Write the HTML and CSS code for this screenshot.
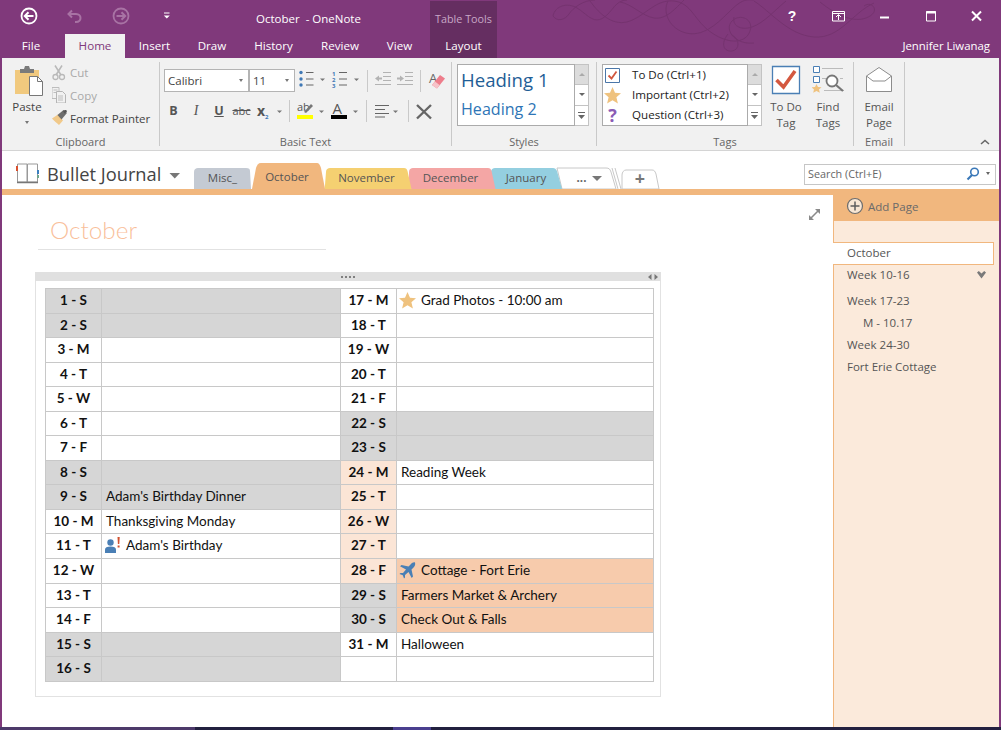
FILE: index.html
```html
<!DOCTYPE html>
<html lang="en">
<head>
<meta charset="utf-8">
<title>October - OneNote</title>
<link rel="stylesheet" href="styles.css">
</head>
<body>
<div class="app">
  <header class="titlebar">
    <svg class="ornament" viewBox="540 0 360 58" width="360" height="58" fill="none" stroke="#75336f" stroke-width="1">
      <path d="M553 16c2-10 14-14 24-8s16 16 26 10 12-18 24-18"/>
      <path d="M553 16c4 6 12 4 16-2s14-14 26-14"/>
      <path d="M590 1c10 14 24 26 40 20s26-22 44-20 20 20 38 32 34 10 38-2-10-18-18-10 2 24 22 22"/>
      <path d="M620 2c12 2 22 14 34 16s22-10 30-18"/>
      <path d="M668 1c-6 12 2 28 18 32s30-8 42-20 16-14 26-13"/>
      <path d="M728 34c-8 10-4 18 4 17s8-12 0-16"/>
      <path d="M754 1c16 10 34 34 60 36s38-24 60-34"/>
      <path d="M786 1c-10 8-22 22-34 26s-20-2-18-10"/>
      <path d="M820 2c10 8 30 22 46 16s6-18-2-12"/>
    </svg>
    <svg class="qa qa-back" viewBox="2 0 54 34" width="54" height="34"><circle cx="29" cy="16" r="7.5" fill="none" stroke="#fff" stroke-width="1.8"/><path d="M33.500 16H25M28.500 12.300L24.800 16l3.700 3.700" fill="none" stroke="#fff" stroke-width="2"/></svg>
    <svg class="qa qa-undo" viewBox="56 0 38 34" width="38" height="34"><path d="M72 10.500L68.500 14l3.500 3.500M69 14h7c6 0 6 8 0 8h-1" fill="none" stroke="#a873a4" stroke-width="2"/></svg>
    <svg class="qa qa-fwd" viewBox="94 0 54 34" width="54" height="34"><circle cx="121" cy="16" r="7.500" fill="none" stroke="#a873a4" stroke-width="1.800"/><path d="M116.500 16H125M121.500 12.300l3.700 3.700-3.700 3.700" fill="none" stroke="#a873a4" stroke-width="2"/></svg>
    <svg class="qa qa-cust" viewBox="148 0 36 34" width="36" height="34"><path d="M164 13h5.500" stroke="#fff" stroke-width="1"/><path d="M163.800 15.500h6l-3 3z" fill="#fff"/></svg>
    <div class="doc-title">October&nbsp; - OneNote</div>
    <div class="ctx-head">Table Tools</div>
    <div class="winbtns">
      <span class="winbtn help">?</span>
      <svg class="winbtn" viewBox="815 0 46 34" width="46" height="34"><path d="M832.500 11.500h12v9.500h-12zM832.500 13.500h12" fill="none" stroke="#fff"/><path d="M838.500 20v-5M836 17l2.500-2.500L841 17" fill="none" stroke="#fff"/></svg>
      <svg class="winbtn" viewBox="861 0 46 34" width="46" height="34"><path d="M880 17.500h9" stroke="#fff" stroke-width="2"/></svg>
      <svg class="winbtn" viewBox="907 0 46 34" width="46" height="34"><path d="M926.500 11.500h9v9.500h-9z" fill="none" stroke="#fff"/><path d="M926 12.500h10" stroke="#fff" stroke-width="2"/></svg>
      <svg class="winbtn" viewBox="953 0 46 34" width="46" height="34"><path d="M972 11.500l9 9M981 11.500l-9 9" stroke="#fff" stroke-width="2"/></svg>
    </div>
  </header>

  <nav class="tabs">
    <span class="tab tab-file">File</span>
    <span class="tab tab-home">Home</span>
    <span class="tab tab-insert">Insert</span>
    <span class="tab tab-draw">Draw</span>
    <span class="tab tab-history">History</span>
    <span class="tab tab-review">Review</span>
    <span class="tab tab-view">View</span>
    <span class="tab tab-layout">Layout</span>
    <span class="user">Jennifer Liwanag</span>
  </nav>

  <section class="ribbon">
    <div class="group g-clip">
      <div class="g-body clip-body">
        <div class="paste">
          <svg viewBox="13 66 30 30" width="30" height="30"><path d="M15 70h24v24H15z" fill="#f1c97e"/><path d="M20 69h4l1-3h4l1 3h4v4H20z" fill="#7a7a7a"/><path d="M29.500 76.500h8l5 5v14h-13z" fill="#fff" stroke="#777"/><path d="M37.500 76.500v5h5" fill="none" stroke="#777"/></svg>
          <span class="paste-label">Paste</span>
          <span class="caret paste-caret"></span>
        </div>
        <div class="small-col">
          <div class="small small-cut dim"><svg viewBox="52 65 16 16" width="16" height="16"><path d="M55 65.500l6 9.500M62 65.500l-6 9.500" stroke="#b9b9b9" stroke-width="1.500" fill="none"/><circle cx="55.500" cy="77" r="2.500" fill="none" stroke="#b9b9b9" stroke-width="1.300"/><circle cx="62" cy="77" r="2.500" fill="none" stroke="#b9b9b9" stroke-width="1.300"/></svg>Cut</div>
          <div class="small small-copy dim"><svg viewBox="52 88 16 16" width="16" height="16"><path d="M51.500 88.500h7v11h-7zM53 91h4M53 93.500h4" transform="translate(0.500 0)" fill="none" stroke="#bdbdbd"/><path d="M56.500 92.500h6l3 3v8.500h-9z" fill="#f1f1f1" stroke="#b5b5b5"/><path d="M58 97h5M58 99h5M58 101h5" stroke="#bdbdbd"/></svg>Copy</div>
          <div class="small"><svg viewBox="52 110 16 16" width="16" height="16"><path d="M52 118.500l6-4 5 6-4 4.500c-2-2-5-4-7-6.500z" fill="#f1c98a"/><path d="M57.500 115l6-5 3 2 0 1.500-5 6z" fill="#6d6d6d"/><path d="M63 111l3-1.500 1 2-2.500 2z" fill="#555"/></svg>Format Painter</div>
        </div>
      </div>
      <div class="g-label">Clipboard</div>
    </div>

    <div class="group g-basic">
      <div class="g-body">
        <div class="row row1">
          <div class="combo combo-font"><span>Calibri</span><span class="caret"></span></div>
          <div class="combo combo-size"><span>11</span><span class="caret"></span></div>
          <svg viewBox="295 69 33 23" width="33" height="23"><g fill="#3f78b5"><circle cx="301" cy="72.500" r="1.700"/><circle cx="301" cy="79" r="1.700"/><circle cx="301" cy="85" r="1.700"/></g><path d="M306 72.500h7.500M306 79h7.500M306 85h7.500" stroke="#666"/><path d="M320 78.500h5l-2.500 2.500z" fill="#777"/></svg>
          <svg viewBox="328 69 39 23" width="39" height="23"><text x="332" y="75.500" class="numtx">1</text><text x="332" y="81.500" class="numtx">2</text><text x="332" y="88" class="numtx">3</text><path d="M339 72.500h8M339 79h8M339 85h8" stroke="#666"/><path d="M354 78.500h5l-2.500 2.500z" fill="#777"/></svg>
          <span class="sep"></span>
          <svg viewBox="368 69 52 23" width="52" height="23"><path d="M383 72.500h8M383 76.500h8M375 84.500h16M383 80.500h8" stroke="#b3b3b3"/><path d="M375 78.500l4-3v2h3v2h-3v2z" fill="#b3b3b3"/><path d="M405 72.500h8M405 76.500h8M397 84.500h16M405 80.500h8" stroke="#b3b3b3"/><path d="M404 78.500l-4-3v2h-3v2h3v2z" fill="#b3b3b3"/></svg>
          <span class="sep"></span>
          <svg viewBox="421 69 30 23" width="30" height="23"><text x="429" y="83" class="eraser-a">A</text><path d="M432 85l8-10 5 3.500-8 10z" fill="#ee7d8b"/><path d="M432 85l3-3.500 4.500 3.500-2.500 3.500z" fill="#f6c3c9"/></svg>
        </div>
        <div class="row row2">
          <span class="fmt fmt-b">B</span>
          <span class="fmt fmt-i">I</span>
          <span class="fmt fmt-u">U</span>
          <span class="fmt fmt-s">abc</span>
          <svg viewBox="254 99 35 24" width="35" height="24"><text x="257" y="116" class="sub-x">x</text><text x="265" y="118.500" class="sub-2">2</text><path d="M277 110.500h5l-2.500 2.500z" fill="#777"/></svg>
          <span class="sep"></span>
          <svg viewBox="291 99 37 24" width="37" height="24"><text x="298" y="111" class="hl-ab">ab</text><path d="M305 112l7-8 2 2-7 7z" fill="#777"/><path d="M298 115h16v4h-16z" fill="#ffff00"/><path d="M320 110.500h5l-2.500 2.500z" fill="#777"/></svg>
          <svg viewBox="328 99 39 24" width="39" height="24"><text x="333.500" y="114" class="fc-a">A</text><path d="M332 115h16v4h-16z" fill="#000"/><path d="M354 110.500h5l-2.500 2.500z" fill="#777"/></svg>
          <span class="sep"></span>
          <svg viewBox="368 99 41 24" width="41" height="24"><path d="M376 105.500h14M376 109.500h10M376 113.500h14M376 117h10" stroke="#666"/><path d="M394 110.500h5l-2.500 2.500z" fill="#777"/></svg>
          <span class="sep"></span>
          <svg viewBox="410 99 41 24" width="41" height="24"><path d="M418 105l14 13.500M432 105l-14 13.500" stroke="#666" stroke-width="2.400"/></svg>
        </div>
      </div>
      <div class="g-label">Basic Text</div>
    </div>

    <div class="group g-styles">
      <div class="g-body gallery-wrap">
        <div class="gallery gallery-styles">
          <div class="h1">Heading 1</div>
          <div class="h2">Heading 2</div>
        </div>
        <div class="scroll">
          <span class="sb sb-up"><i class="tri-up"></i></span>
          <span class="sb"><i class="tri-down"></i></span>
          <span class="sb"><svg viewBox="0 0 7 7" width="7" height="7"><path d="M0 0h7v1H0zM0 3h7L3.500 7z" fill="#666"/></svg></span>
        </div>
      </div>
      <div class="g-label">Styles</div>
    </div>

    <div class="group g-tags">
      <div class="g-body gallery-wrap">
        <div class="gallery gallery-tags">
          <div class="tagrow"><svg viewBox="0 0 17 17" width="17" height="17"><path d="M1.500 1.500h14v14h-14z" fill="#fff" stroke="#4a76a8"/><path d="M4.500 8.500l3 3 5-7" fill="none" stroke="#d0573f" stroke-width="1.800"/></svg><span>To Do (Ctrl+1)</span></div>
          <div class="tagrow"><svg viewBox="0 0 17 17" width="17" height="17"><path d="M8.500 0l2.500 5.800 6 .5-4.600 4 1.500 6.200-5.400-3.300-5.400 3.300 1.500-6.200L0 6.300l6-.5z" fill="#efc27e"/></svg><span>Important (Ctrl+2)</span></div>
          <div class="tagrow"><span class="tag-q">?</span><span>Question (Ctrl+3)</span></div>
        </div>
        <div class="scroll">
          <span class="sb sb-up"><i class="tri-up"></i></span>
          <span class="sb"><i class="tri-down"></i></span>
          <span class="sb"><svg viewBox="0 0 7 7" width="7" height="7"><path d="M0 0h7v1H0zM0 3h7L3.500 7z" fill="#666"/></svg></span>
        </div>
        <div class="big big-todo">
          <svg viewBox="771 65 30 32" width="30" height="32"><path d="M772.500 66.500h27v27h-27z" fill="#fff" stroke="#4a7fb5" stroke-width="1.300"/><path d="M776.500 80l7 7 11.500-16" fill="none" stroke="#d4583f" stroke-width="3.600"/></svg>
          <span>To Do</span><span>Tag</span>
        </div>
        <div class="big big-find">
          <svg viewBox="812 65 32 32" width="32" height="32"><path d="M813.500 66.500h6v6h-6zM813.500 76.500h6v6h-6z" fill="#fff" stroke="#4a7fb5"/><path d="M822 68.500h21M822 78.500h4M840 78.500h3M824 90.500h20" stroke="#bbb"/><circle cx="832" cy="81" r="5.500" fill="#fff" stroke="#777" stroke-width="1.800"/><path d="M836 85l7 6" stroke="#777" stroke-width="2.200"/><path d="M816.500 84l1.500 3 3.500.3-2.500 2.200.8 3.300-3.300-1.800-3.300 1.800.8-3.300-2.500-2.200 3.500-.3z" fill="#efc27e"/></svg>
          <span>Find</span><span>Tags</span>
        </div>
      </div>
      <div class="g-label">Tags</div>
    </div>

    <div class="group g-email">
      <div class="g-body">
        <div class="big big-email">
          <svg viewBox="864 65 30 32" width="30" height="32"><path d="M866.500 76l12.500-8.500L891.500 76v15.500h-25z" fill="#fff" stroke="#8c8c8c"/><path d="M866.500 76l6.500 5h12l6.500-5" fill="none" stroke="#8c8c8c"/></svg>
          <span>Email</span><span>Page</span>
        </div>
      </div>
      <div class="g-label">Email</div>
    </div>

    <div class="collapse"><svg viewBox="0 0 10 6" width="10" height="6"><path d="M1 5l4-3.500L9 5" fill="none" stroke="#666" stroke-width="1.500"/></svg></div>
  </section>

  <section class="navrow">
    <svg class="nb-icon" viewBox="2 151 45 38" width="45" height="38"><path d="M17.500 164h9.500v18H17.500zM27.500 164H37.500v18H27.500z" fill="#fff" stroke="#999"/><path d="M17 182.500h21" stroke="#777" stroke-width="1.500"/><path d="M16 166h2v5h-2z" fill="#d9502e"/><path d="M37 170h2v4h-2z" fill="#3a7fc1"/><path d="M37 175h2v3h-2z" fill="#6fa58c"/></svg>
    <div class="nb-title">Bullet Journal</div>
    <svg class="nb-caret" viewBox="169 151 25 38" width="25" height="38"><path d="M169.500 173h10.500l-5.250 5.500z" fill="#777"/></svg>
    <div class="strip">
      <svg class="strip-bg" viewBox="194 151 470 38" width="470" height="38">
        <path d="M622 189l0-14c0-3 2-5 4-5h26c2 0 3 1 4 4l3 15z" fill="#fff" stroke="#c8c8c8"/>
        <path d="M615 168l6 21M612 168l6 21" fill="none" stroke="#c8c8c8"/>
        <path d="M557 168h49c3 0 4 1 5 4l5 17h-54z" fill="#fff" stroke="#c8c8c8"/>
        <path d="M491 172c0-3 2-4 4-4h58c2 0 3 1 4 3l5 18h-68z" fill="#94cfe0"/>
        <path d="M409 189v-17c0-3 2-4 4-4h75c2 0 3 1 3.500 3l4 18z" fill="#f4a6a5"/>
        <path d="M325 185l1-13c0-3 2-4 4-4h74c2 0 3 1 3.500 3l4 18h-87z" fill="#f5d071"/>
        <path d="M194 189v-17c0-3 2-4 4-4h48c3 0 4 1 4 3l1 18z" fill="#c4cad3"/>
        <path d="M252 189l4-21c1-3 2-5 5-5h56c2 0 3 2 4 5l4 21z" fill="#f1b77e"/>
      </svg>
      <div class="labels">
        <span class="sl sl-misc">Misc_</span>
        <span class="sl sl-oct">October</span>
        <span class="sl sl-nov">November</span>
        <span class="sl sl-dec">December</span>
        <span class="sl sl-jan">January</span>
        <span class="sl sl-more">...<i class="more-tri"></i></span>
        <span class="sl sl-plus">+</span>
      </div>
    </div>
    <div class="search">
      <span class="search-text">Search (Ctrl+E)</span>
      <svg viewBox="0 0 14 14" width="14" height="14"><circle cx="8.500" cy="5" r="3.800" fill="none" stroke="#3a78b8" stroke-width="1.600"/><path d="M6 8l-4.500 4.500" stroke="#3a78b8" stroke-width="2.200"/></svg>
      <span class="search-caret"></span>
    </div>
  </section>

  <div class="orangebar"></div>

  <main class="main">
    <div class="page">
      <svg class="expand" viewBox="0 0 13 13" width="13" height="13"><path d="M2.500 10.500l8-8" stroke="#8a8a8a" stroke-width="1.600"/><path d="M7 1h5v5zM1 7v5h5z" fill="#8a8a8a"/></svg>
      <div class="page-title"><h1>October</h1></div>
      <div class="outline">
        <div class="outline-bar">
          <svg class="grip" viewBox="0 0 14 2" width="14" height="2"><path d="M0 0h2v2H0zM4 0h2v2H4zM8 0h2v2H8zM12 0h2v2h-2z" fill="#808080"/></svg>
          <svg class="ol-arrows" viewBox="0 0 10 6" width="10" height="6"><path d="M3.500 0v6L0 3zM6.500 0v6L10 3z" fill="#777"/></svg>
        </div>
        <table class="cal">
          <colgroup><col class="c1"><col class="c2"><col class="c3"><col class="c4"></colgroup>
          <tbody>
            <tr class="t"><td class="d wk">1 - S</td><td class="wk"></td><td class="d">17 - M</td><td><span class="with-icon"><svg viewBox="0 0 17 17" width="17" height="17"><path d="M8.500 0l2.500 5.800 6 .5-4.600 4 1.500 6.200-5.400-3.300-5.400 3.300 1.500-6.200L0 6.300l6-.5z" fill="#efc27e"/></svg>Grad Photos - 10:00 am</span></td></tr>
            <tr class="s"><td class="d wk">2 - S</td><td class="wk"></td><td class="d">18 - T</td><td></td></tr>
            <tr class="t"><td class="d">3 - M</td><td></td><td class="d">19 - W</td><td></td></tr>
            <tr class="s"><td class="d">4 - T</td><td></td><td class="d">20 - T</td><td></td></tr>
            <tr class="t"><td class="d">5 - W</td><td></td><td class="d">21 - F</td><td></td></tr>
            <tr class="s"><td class="d">6 - T</td><td></td><td class="d wk">22 - S</td><td class="wk"></td></tr>
            <tr class="t"><td class="d">7 - F</td><td></td><td class="d wk">23 - S</td><td class="wk"></td></tr>
            <tr class="s"><td class="d wk">8 - S</td><td class="wk"></td><td class="d pe">24 - M</td><td>Reading Week</td></tr>
            <tr class="t"><td class="d wk">9 - S</td><td class="wk">Adam's Birthday Dinner</td><td class="d pe">25 - T</td><td></td></tr>
            <tr class="s"><td class="d">10 - M</td><td>Thanksgiving Monday</td><td class="d pe">26 - W</td><td></td></tr>
            <tr class="t"><td class="d">11 - T</td><td><span class="with-icon"><svg viewBox="0 0 17 17" width="17" height="17"><circle cx="6.500" cy="5.500" r="3.200" fill="#4a7fb5"/><path d="M1 16v-3.500c0-2 2-3 5.500-3s5.500 1 5.500 3V16z" fill="#4a7fb5"/><path d="M13.500 0h2.200l-.4 7h-1.400zM13.600 8.500h2v2h-2z" fill="#d0502f"/></svg>Adam's Birthday</span></td><td class="d pe">27 - T</td><td></td></tr>
            <tr class="t"><td class="d">12 - W</td><td></td><td class="d pe">28 - F</td><td class="or"><span class="with-icon"><svg viewBox="0 0 17 17" width="17" height="17"><path d="M16 .5c-1.500-.5-3 .5-4 1.500L9.500 4.500 2.500 3 1 4.300 7 7.500 4 11H1.500L.5 12l3.300 1.300L5 16.500l1-1v-2.500l3.500-3 3.200 6 1.300-1.500L12.500 7.500 15 5c1-1 1.500-3 1-4.500z" fill="#4a7fb5"/></svg>Cottage - Fort Erie</span></td></tr>
            <tr class="s"><td class="d">13 - T</td><td></td><td class="d wk">29 - S</td><td class="or">Farmers Market &amp; Archery</td></tr>
            <tr class="t"><td class="d">14 - F</td><td></td><td class="d wk">30 - S</td><td class="or">Check Out &amp; Falls</td></tr>
            <tr class="s"><td class="d wk">15 - S</td><td class="wk"></td><td class="d">31 - M</td><td>Halloween</td></tr>
            <tr class="t"><td class="d wk">16 - S</td><td class="wk"></td><td class="d"></td><td></td></tr>
          </tbody>
        </table>
      </div>
    </div>
    <aside class="side">
      <div class="addpage"><svg viewBox="0 0 18 18" width="18" height="18"><circle cx="9" cy="9" r="7.500" fill="#f8e6d4" stroke="#6d6d6d" stroke-width="1.200"/><path d="M9 4.500v9M4.500 9h9" stroke="#5d5d5d" stroke-width="1.500"/></svg><span>Add Page</span></div>
      <div class="pages">
        <div class="pg pg-cur">October</div>
        <div class="pg pg-w1">Week 10-16<svg viewBox="0 0 9 8" width="9" height="8"><path d="M0 1.500l1.800-1.500 2.700 2.500L7.200 0 9 1.500 4.500 7.500z" fill="#7a7a7a"/></svg></div>
        <div class="pg">Week 17-23</div>
        <div class="pg pg-sub">M - 10.17</div>
        <div class="pg">Week 24-30</div>
        <div class="pg">Fort Erie Cottage</div>
      </div>
    </aside>
  </main>

  <footer class="taskbar"><span class="tb-a"></span><span class="tb-b"></span><span class="tb-c"></span><span class="tb-d"></span></footer>
</div>
</body>
</html>
```

FILE: styles.css
```css
* { box-sizing: border-box; }
html, body { margin: 0; padding: 0; }
body { font-family: "Open Sans", "Noto Sans", sans-serif; font-size: 11.5px; color: #444; overflow: hidden; }
svg { display: block; flex: none; }

.app { width: 1001px; height: 730px; background: #80397b; padding: 0 2px; display: flex; flex-direction: column; overflow: hidden; }

.titlebar { height: 34px; display: flex; color: #fff; position: relative; flex: none; }
.ornament { position: absolute; left: 538px; top: 0; }
.doc-title { margin-left: 72px; width: 174px; line-height: 38px; font-size: 11.5px; white-space: nowrap; }
.ctx-head { width: 67px; margin-top: 1px; background: #652e61; color: #c8a8c6; text-align: center; line-height: 36px; font-size: 10.8px; white-space: nowrap; position: relative; }
.winbtns { margin-left: auto; display: flex; position: relative; }
.winbtn { width: 46px; height: 34px; }
.help { text-align: center; font-weight: 700; font-size: 14px; line-height: 33px; font-family: "Liberation Sans", sans-serif; }

.tabs { height: 24px; display: flex; color: #fff; flex: none; position: relative; }
.tab { text-align: center; line-height: 24px; font-size: 11.6px; white-space: nowrap; }
.tab-file { width: 58px; margin-right: 5px; }
.tab-home { width: 60px; background: #f1f1f1; color: #80397b; }
.tab-insert { width: 59px; }
.tab-draw { width: 56px; }
.tab-history { width: 67px; }
.tab-review { width: 66px; }
.tab-view { width: 53px; margin-right: 4px; }
.tab-layout { width: 67px; background: #652e61; }
.user { margin-left: auto; margin-right: 9px; line-height: 24px; font-size: 11.4px; }

.ribbon { height: 93px; background: #f1f1f1; border-bottom: 1px solid #d4d4d4; display: flex; align-items: flex-start; flex: none; position: relative; }
.group { height: 84px; margin-top: 4px; border-right: 1px solid #c9c9c9; display: flex; flex-direction: column; flex: none; }
.g-clip { width: 158px; }
.g-basic { width: 292px; }
.g-styles { width: 145px; }
.g-tags { width: 257px; }
.g-email { width: 51px; }
.g-body { height: 74px; flex: none; }
.g-label { height: 10px; line-height: 12px; text-align: center; font-size: 11px; color: #666; }
.collapse { position: absolute; right: 9px; bottom: 5px; }

.caret { display: block; width: 0; height: 0; border: 2.5px solid transparent; border-top: 3px solid #777; border-bottom: 0; }

.clip-body { display: flex; }
.paste { width: 50px; padding-top: 4px; display: flex; flex-direction: column; align-items: center; }
.paste svg { margin-left: 2px; }
.paste-label { margin-top: 3px; line-height: 16px; color: #444; }
.paste-caret { margin-top: 6px; margin-left: -1px; }
.small-col { display: flex; flex-direction: column; }
.small { height: 22.5px; display: flex; align-items: center; gap: 2px; white-space: nowrap; color: #444; }
.small.dim { color: #a9a9a9; }
.small-cut { height: 21px; }
.small-copy { height: 24px; }

.row { display: flex; align-items: center; padding-left: 4px; }
.row1 { margin-top: 7px; height: 23px; }
.row2 { margin-top: 7px; height: 24px; }
.combo { height: 23px; border: 1px solid #b4b4b4; background: #fff; display: flex; align-items: center; justify-content: space-between; padding: 0 5px 0 3px; font-size: 11.5px; color: #444; }
.combo-font { width: 85px; }
.combo-size { width: 46px; margin-right: 0; }
.sep { width: 1px; height: 22px; background: #c9c9c9; flex: none; }
.row1 > .sep { margin: 0; }
.numtx { font-size: 6px; font-weight: 700; fill: #3f78b5; font-family: "Open Sans", sans-serif; }
.eraser-a { font-size: 13px; fill: #666; font-family: "Open Sans", sans-serif; }
.fmt { text-align: center; color: #555; font-size: 12.5px; line-height: 24px; flex: none; }
.fmt-b { width: 19px; font-weight: 700; }
.fmt-i { width: 26px; font-style: italic; font-family: "Liberation Serif", serif; font-size: 14px; }
.fmt-u { width: 20px; font-weight: 700; text-decoration: underline; }
.fmt-s { width: 25px; font-size: 11px; text-decoration: line-through; }
.sub-x { font-size: 14px; font-weight: 700; fill: #555; font-family: "Open Sans", sans-serif; }
.sub-2 { font-size: 6px; font-weight: 700; fill: #3a78b8; font-family: "Open Sans", sans-serif; }
.hl-ab { font-size: 11px; fill: #555; font-family: "Open Sans", sans-serif; }
.fc-a { font-size: 15px; fill: #555; font-family: "Open Sans", sans-serif; }

.gallery-wrap { display: flex; padding: 2px 0 0 5px; }
.gallery { height: 62px; border: 1px solid #ababab; background: #fff; }
.gallery-styles { width: 118px; padding-left: 3px; }
.gallery-tags { width: 146px; padding: 0 0 0 1px; display: flex; flex-direction: column; justify-content: flex-start; }
.h1 { font-size: 18.600px; line-height: 29px; color: #1f5e96; white-space: nowrap; }
.h2 { font-size: 16.100px; line-height: 31px; color: #2e75b6; white-space: nowrap; }
.scroll { width: 14px; height: 62px; display: flex; flex-direction: column; border: 1px solid #c3c3c3; border-left: 0; flex: none; }
.sb { flex: 1; background: #fff; border-bottom: 1px solid #c3c3c3; display: flex; align-items: center; justify-content: center; }
.sb:last-child { border-bottom: 0; }
.sb-up { background: #dcdcdc; }
.tri-up { border: 3px solid transparent; border-bottom: 3px solid #aaa; border-top: 0; }
.tri-down { border: 3px solid transparent; border-top: 3px solid #666; border-bottom: 0; }
.tagrow { display: flex; align-items: center; height: 20px; flex: none; gap: 11px; color: #222; white-space: nowrap; font-size: 11.6px; }
.tagrow span:last-child { margin-top: -1px; }
.tag-q { width: 17px; text-align: center; color: #8a5cb5; font-weight: 700; font-size: 18px; line-height: 20px; }
.big { display: flex; flex-direction: column; align-items: center; padding-top: 1px; line-height: 16px; color: #555; white-space: nowrap; flex: none; }
.big svg { margin-bottom: 2px; }
.big-todo { width: 48px; }
.big-find { width: 36px; }
.big-email { width: 50px; margin-top: 2px; }

.navrow { height: 38px; background: #fff; display: flex; align-items: flex-start; flex: none; }
.nb-title { width: 122px; font-size: 18.300px; line-height: 24px; margin-top: 11px; color: #444; white-space: nowrap; }
.strip { width: 470px; height: 38px; position: relative; flex: none; }
.strip-bg { position: absolute; left: 0; top: 0; }
.labels { position: relative; display: flex; height: 38px; align-items: flex-end; }
.sl { text-align: center; font-size: 11.5px; line-height: 22px; color: #555; white-space: nowrap; flex: none; }
.sl-misc { width: 57px; }
.sl-oct { width: 72px; line-height: 25px; }
.sl-nov { width: 87px; }
.sl-dec { width: 81px; }
.sl-jan { width: 70px; }
.sl-more { width: 57px; font-weight: 700; line-height: 20px; color: #666; display: flex; justify-content: center; align-items: center; gap: 6px; height: 22px; }
.more-tri { border: 5px solid transparent; border-top: 5px solid #777; border-bottom: 0; }
.sl-plus { width: 36px; margin-left: 4px; font-size: 18px; font-weight: 700; color: #777; line-height: 22px; }
.search { margin-left: auto; margin-top: 13px; margin-right: 3px; width: 192px; height: 21px; border: 1px solid #c6c6c6; display: flex; align-items: center; padding: 0 5px 2px 3px; font-size: 10.8px; color: #666; flex: none; }
.search-text { flex: 1; }
.search-caret { margin-left: 6px; border: 2.5px solid transparent; border-top: 3px solid #666; border-bottom: 0; }

.orangebar { height: 6px; background: #f1b77e; flex: none; }

.main { flex: 1; display: flex; min-height: 0; background: #fff; }
.page { flex: 1; position: relative; padding: 20px 0 0 36px; }
.expand { position: absolute; left: 806px; top: 13px; }
.page-title { width: 288px; height: 35px; border-bottom: 1px solid #e2e2e2; padding-left: 12px; }
.page-title h1 { margin: 0; font: 300 24.300px/30px "Lato", sans-serif; color: #f9bf9b; }
.outline { width: 626px; height: 425px; margin: 22px 0 0 -3px; border: 1px solid #e2e2e2; border-top: 0; }
.outline-bar { height: 9px; background: #e0e0e0; margin: 0 -1px; position: relative; }
.grip { position: absolute; left: 306px; top: 4px; }
.ol-arrows { position: absolute; right: 3px; top: 2px; }
.cal { border-collapse: separate; border-spacing: 0; table-layout: fixed; width: 608px; margin: 7px 0 0 9px; border-top: 1px solid #c8c8c8; border-left: 1px solid #c8c8c8; font: 13.500px "Lato", sans-serif; color: #111; }
.c1 { width: 56px; }
.c2 { width: 239px; }
.c3 { width: 56px; }
.c4 { width: 257px; }
.cal td { border-right: 1px solid #c8c8c8; border-bottom: 1px solid #c8c8c8; padding: 0 0 2px 4px; white-space: nowrap; overflow: hidden; }
.cal td.d { padding: 0 0 2px; text-align: center; font-weight: 700; }
.t { height: 25px; }
.s { height: 24px; }
.cal td.wk { background: #d6d6d6; }
.cal td.pe { background: #fbe5d6; }
.cal td.or { background: #f7cbac; }
.with-icon { display: flex; align-items: center; gap: 5px; margin-left: -2px; }

.side { width: 166px; background: #fbeadb; display: flex; flex-direction: column; flex: none; }
.addpage { height: 26px; background: #f1b77e; display: flex; align-items: center; padding: 0 0 4px 13px; gap: 4px; color: #6a6a6a; font-size: 11.5px; flex: none; }
.pages { flex: 1; border-left: 1px solid #f1b77e; padding-top: 21px; color: #555; font-size: 11.5px; }
.pg { height: 22px; line-height: 22px; padding-left: 13px; white-space: nowrap; }
.pg-cur { margin-left: -1px; margin-right: 5px; height: 23px; line-height: 20px; background: #fff; border: 1px solid #f1b77e; border-left: 0; padding-left: 14px; }
.pg-w1 { height: 25px; line-height: 20px; display: flex; justify-content: space-between; align-items: flex-start; padding-right: 13px; }
.pg-w1 svg { margin-top: 6px; }
.pg-sub { padding-left: 29px; }

.taskbar { height: 3px; display: flex; margin: 0 -2px; flex: none; }
.tb-a { width: 195px; background: #4d3a6a; }
.tb-b { width: 198px; background: #22203f; }
.tb-c { width: 38px; background: #4a3f8f; }
.tb-d { flex: 1; background: #22203f; }
```
